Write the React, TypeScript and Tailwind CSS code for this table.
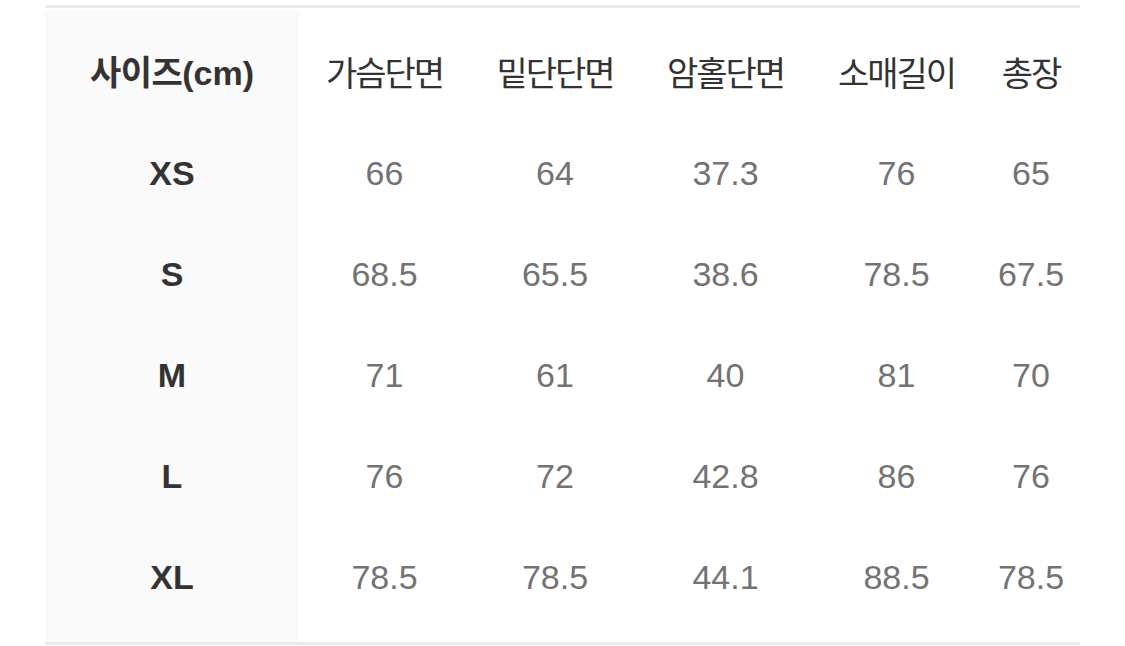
const headers = ["가슴단면", "밑단단면", "암홀단면", "소매길이", "총장"];

const rows: { size: string; values: string[] }[] = [
  { size: "XS", values: ["66", "64", "37.3", "76", "65"] },
  { size: "S", values: ["68.5", "65.5", "38.6", "78.5", "67.5"] },
  { size: "M", values: ["71", "61", "40", "81", "70"] },
  { size: "L", values: ["76", "72", "42.8", "86", "76"] },
  { size: "XL", values: ["78.5", "78.5", "44.1", "88.5", "78.5"] },
];

const colWidths = ["w-[171px]", "w-[170px]", "w-[171px]", "w-[171px]", "w-[98px]"];

export default function App() {
  return (
    <main
      className="min-h-screen bg-white pl-[45px] pt-[5px]"
      style={{ fontFamily: '"Liberation Sans", "Noto Sans CJK KR", sans-serif' }}
    >
      <div className="w-[1035px] border-t-[3px] border-b-[3px] border-[#ebebeb] pt-[3px]">
        <div className="flex">
          {/* size column */}
          <div className="flex w-[254px] flex-col bg-[#fafafa] pt-[11px] pb-[14px]">
            <div className="flex h-[101px] items-center justify-center pt-[2px] text-[34px] font-bold text-[#333]">
              <span className="tracking-[-0.5px]">사이즈</span>
              <span>(cm)</span>
            </div>
            {rows.map((r) => (
              <div
                key={r.size}
                className="flex h-[101px] items-center justify-center text-[34px] font-bold text-[#333]"
              >
                {r.size}
              </div>
            ))}
          </div>

          {headers.map((h, i) => (
            <div key={h} className={`flex flex-col pt-[11px] pb-[14px] ${colWidths[i]}`}>
              <div className="flex h-[101px] items-center justify-center whitespace-nowrap pt-[3px] text-[34px] tracking-[-2px] text-[#333]">
                {h}
              </div>
              {rows.map((r) => (
                <div
                  key={r.size}
                  className="flex h-[101px] items-center justify-center text-[34px] text-[#737373]"
                >
                  {r.values[i]}
                </div>
              ))}
            </div>
          ))}
        </div>
      </div>
    </main>
  );
}
